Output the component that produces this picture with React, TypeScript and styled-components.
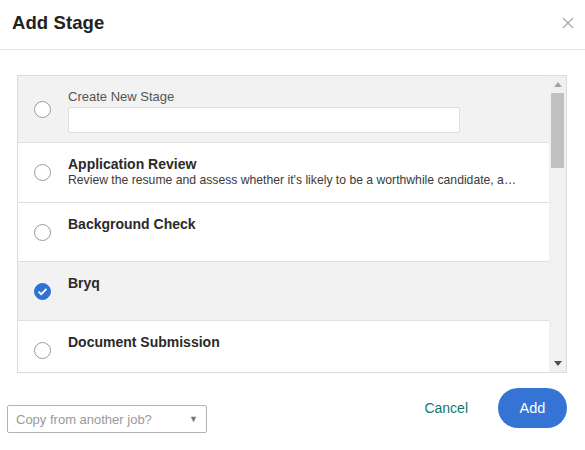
import React from "react";
import styled, { createGlobalStyle } from "styled-components";

const Global = createGlobalStyle`
  html, body { margin: 0; padding: 0; background: #fff; }
  body { font-family: "Liberation Sans", Arial, sans-serif; color: #222; }
  * { box-sizing: border-box; }
`;

const Dialog = styled.div`
  width: 585px;
  height: 450px;
  display: flex;
  flex-direction: column;
  overflow: hidden;
`;

const Header = styled.div`
  height: 50px;
  display: flex;
  align-items: center;
  justify-content: space-between;
  padding: 0 11px 4px 12px;
  border-bottom: 1px solid #e3e3e3;
`;

const Title = styled.h1`
  margin: 0;
  font-size: 18.5px;
  font-weight: 700;
  color: #222;
  letter-spacing: 0.1px;
`;

const CloseButton = styled.button`
  border: 0;
  background: none;
  padding: 0;
  width: 12px;
  height: 12px;
  display: flex;
  cursor: pointer;
`;

const Body = styled.div`
  padding: 25px 18px 0 17px;
`;

const ListBox = styled.div`
  height: 298px;
  border: 1px solid #dcdcdc;
  display: flex;
  overflow: hidden;
`;

const Rows = styled.div`
  flex: 1;
  display: flex;
  flex-direction: column;
  overflow: hidden;
`;

const Row = styled.div<{ $shaded?: boolean }>`
  flex: none;
  display: flex;
  align-items: center;
  min-height: 59px;
  padding: 0 0 0 16px;
  background: ${(p) => (p.$shaded ? "#f2f2f2" : "#fff")};
  border-bottom: 1px solid #dfdfdf;
`;

const CreateRow = styled(Row)`
  min-height: 67px;
`;

const Radio = styled.span<{ $checked?: boolean }>`
  flex: none;
  width: 17px;
  height: 17px;
  border-radius: 50%;
  border: 1px solid ${(p) => (p.$checked ? "#2f72d3" : "#9a9a9a")};
  background: ${(p) => (p.$checked ? "#2f72d3" : "#fff")};
  display: flex;
  align-items: center;
  justify-content: center;
  margin-right: 17px;
`;

const RowText = styled.div`
  flex: 1;
  min-width: 0;
  align-self: flex-start;
  padding: 13px 0 13px;
`;

const CreateBody = styled.div`
  flex: 1;
  padding: 12px 0 9px;
  display: flex;
  flex-direction: column;
  gap: 2px;
`;

const FieldLabel = styled.label`
  font-size: 13px;
  line-height: 16px;
  color: #555;
`;

const TextInput = styled.input`
  width: 392px;
  height: 26px;
  border: 1px solid #dedede;
  border-radius: 2px;
  background: #fff;
  font: inherit;
  outline: none;
`;

const StageName = styled.div`
  font-size: 14px;
  line-height: 16px;
  font-weight: 700;
  color: #2a2a2a;
`;

const StageDesc = styled.div`
  font-size: 12.2px;
  line-height: 17px;
  color: #3a3a3a;
  width: 451px;
  white-space: nowrap;
  overflow: hidden;
  text-overflow: ellipsis;
`;

const Scrollbar = styled.div`
  flex: none;
  width: 17px;
  background: #f1f1f1;
  display: flex;
  flex-direction: column;
  align-items: center;
`;

const ArrowBtn = styled.div`
  height: 17px;
  width: 17px;
  display: flex;
  align-items: center;
  justify-content: center;
`;

const Thumb = styled.div`
  width: 13px;
  height: 75px;
  background: #c1c1c1;
`;

const Track = styled.div`
  flex: 1;
`;

const Footer = styled.div`
  display: flex;
  justify-content: space-between;
  align-items: flex-start;
  padding: 15px 18px 0 7px;
`;

const Select = styled.div`
  margin-top: 17px;
  width: 200px;
  height: 28px;
  border: 1px solid #b3b3b3;
  border-radius: 2px;
  background: #fff;
  display: flex;
  align-items: center;
  justify-content: space-between;
  padding: 0 8px 0 8px;
  font-size: 13px;
  color: #9a9a9a;
`;

const Caret = styled.span`
  font-size: 9px;
  color: #777;
`;

const Actions = styled.div`
  display: flex;
  align-items: center;
  gap: 30px;
`;

const CancelButton = styled.button`
  border: 0;
  background: none;
  padding: 0;
  font-family: inherit;
  font-size: 14px;
  color: #13786e;
  margin-top: -1px;
  cursor: pointer;
`;

const AddButton = styled.button`
  width: 69px;
  height: 40px;
  border: 0;
  border-radius: 20px;
  background: #3574d4;
  color: #fff;
  font-family: inherit;
  font-size: 14.5px;
  cursor: pointer;
`;

const stages = [
  {
    name: "Application Review",
    desc:
      "Review the resume and assess whether it's likely to be a worthwhile candidate, and decide on next steps.",
  },
  { name: "Background Check" },
  { name: "Bryq", checked: true },
  { name: "Document Submission" },
];

export default function App() {
  return (
    <>
      <Global />
      <Dialog>
        <Header>
          <Title>Add Stage</Title>
          <CloseButton aria-label="Close">
            <svg width="12" height="12" viewBox="0 0 12 12">
              <path d="M1 1 L11 11 M11 1 L1 11" stroke="#a6a6a6" strokeWidth="1.1" />
            </svg>
          </CloseButton>
        </Header>
        <Body>
          <ListBox>
            <Rows>
              <CreateRow $shaded>
                <Radio />
                <CreateBody>
                  <FieldLabel>Create New Stage</FieldLabel>
                  <TextInput />
                </CreateBody>
              </CreateRow>
              {stages.map((s) => (
                <Row key={s.name} $shaded={s.checked}>
                  <Radio $checked={s.checked}>
                    {s.checked && (
                      <svg width="11" height="9" viewBox="0 0 11 9">
                        <path d="M1.5 4.6 L4.2 7.2 L9.5 1.8" stroke="#fff" strokeWidth="1.7" fill="none" />
                      </svg>
                    )}
                  </Radio>
                  <RowText>
                    <StageName>{s.name}</StageName>
                    {s.desc && <StageDesc>{s.desc}</StageDesc>}
                  </RowText>
                </Row>
              ))}
            </Rows>
            <Scrollbar>
              <ArrowBtn>
                <svg width="8" height="5" viewBox="0 0 8 5">
                  <path d="M0 5 L4 0 L8 5 Z" fill="#a3a3a3" />
                </svg>
              </ArrowBtn>
              <Thumb />
              <Track />
              <ArrowBtn>
                <svg width="8" height="5" viewBox="0 0 8 5">
                  <path d="M0 0 L8 0 L4 5 Z" fill="#505050" />
                </svg>
              </ArrowBtn>
            </Scrollbar>
          </ListBox>
        </Body>
        <Footer>
          <Select>
            <span>Copy from another job?</span>
            <Caret>▼</Caret>
          </Select>
          <Actions>
            <CancelButton>Cancel</CancelButton>
            <AddButton>Add</AddButton>
          </Actions>
        </Footer>
      </Dialog>
    </>
  );
}
